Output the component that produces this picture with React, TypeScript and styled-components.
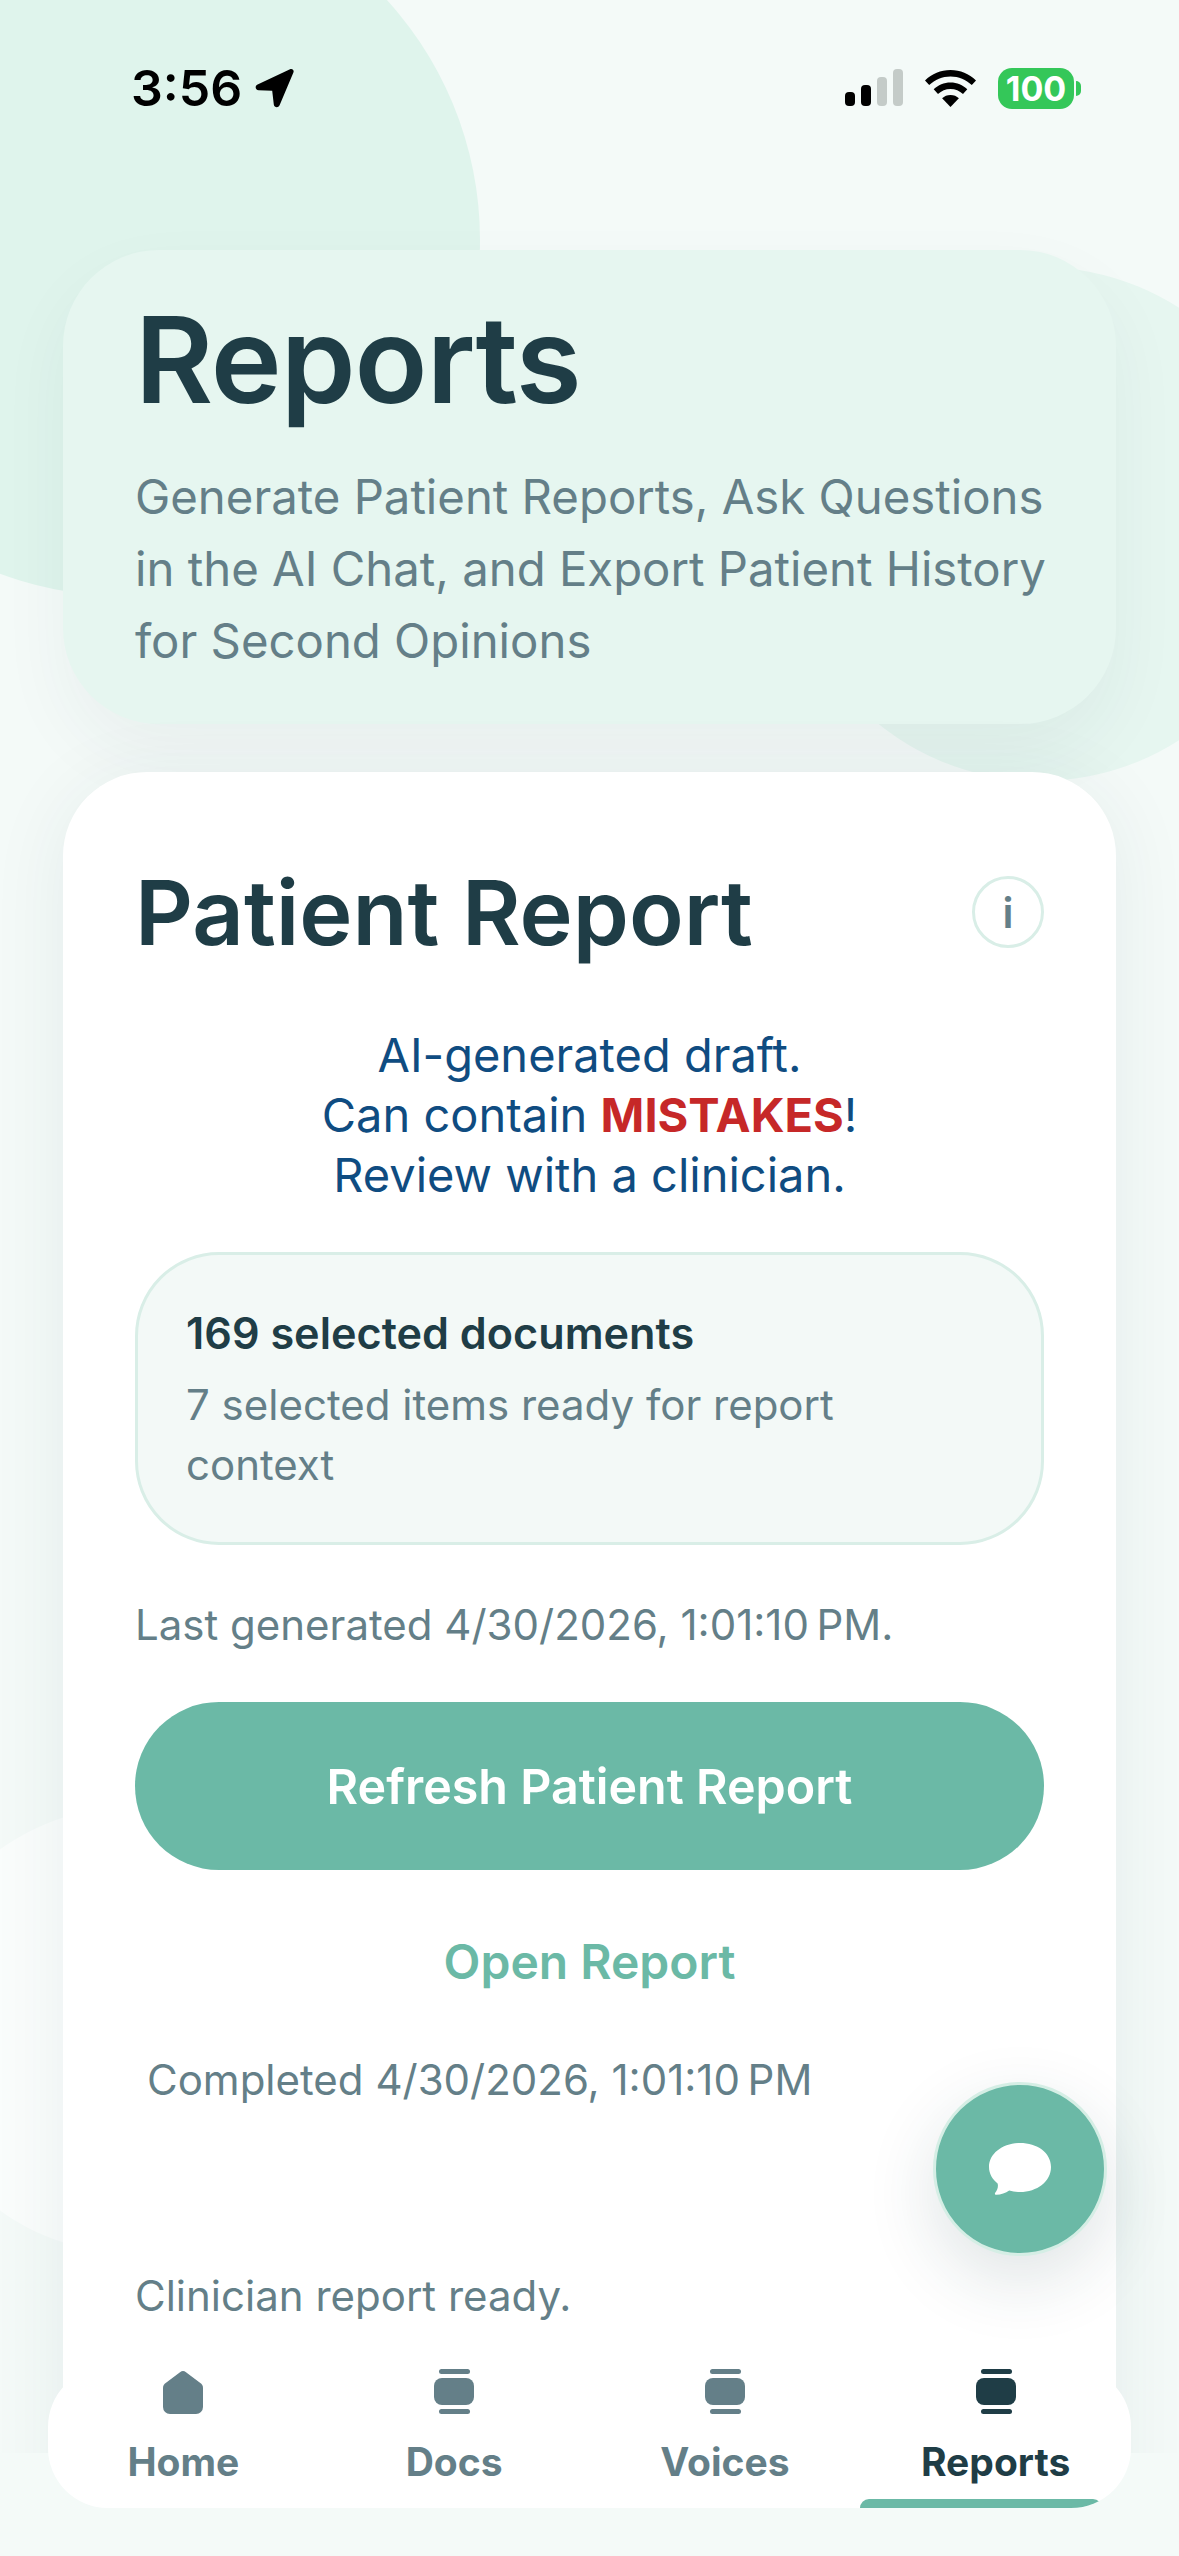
import styled, { createGlobalStyle } from "styled-components";

const GlobalStyle = createGlobalStyle`
  * { box-sizing: border-box; }
  html, body { margin: 0; padding: 0; background: #f4faf8; }
  body { font-family: Inter, "Noto Sans", sans-serif; }
`;

const Screen = styled.div`
  position: relative;
  width: 1179px;
  height: 2556px;
  overflow: hidden;
  background: #f4faf8;
`;

const Blob = styled.div<{ $x: number; $y: number; $r: number; $color: string }>`
  position: absolute;
  left: ${({ $x, $r }) => $x - $r}px;
  top: ${({ $y, $r }) => $y - $r}px;
  width: ${({ $r }) => $r * 2}px;
  height: ${({ $r }) => $r * 2}px;
  border-radius: 50%;
  background: ${({ $color }) => $color};
`;

const Scroll = styled.div`
  position: relative;
  height: 2453px;
  overflow: hidden;
`;

const StatusBar = styled.div`
  display: flex;
  justify-content: space-between;
  align-items: center;
  height: 176px;
  padding: 0 105px 0 131px;
`;

const TimeGroup = styled.div`
  display: flex;
  align-items: center;
  gap: 12px;
`;

const Time = styled.span`
  font-size: 50px;
  font-weight: 600;
  line-height: 60px;
  color: #000;
`;

const StatusIcons = styled.div`
  display: flex;
  align-items: center;
  gap: 22px;
`;

const Battery = styled.div`
  position: relative;
  display: flex;
  align-items: center;
  justify-content: center;
  width: 76px;
  height: 41px;
  border-radius: 14px;
  background: #34c759;
  color: #fff;
  font-size: 34px;
  font-weight: 700;

  &::after {
    content: "";
    position: absolute;
    right: -7px;
    top: 13px;
    width: 5px;
    height: 15px;
    border-radius: 0 8px 8px 0;
    background: #34c759;
  }
`;

const Column = styled.div`
  padding: 74px 63px 0;
`;

const Hero = styled.section`
  height: 474px;
  padding: 36px 72px 0;
  border-radius: 96px;
  background: #e6f6f0;
  box-shadow: 0 30px 70px rgba(31, 61, 70, 0.05);
`;

const HeroTitle = styled.h1`
  margin: 0;
  font-size: 120px;
  line-height: 148px;
  font-weight: 600;
  letter-spacing: -1px;
  color: #1f3d46;
`;

const HeroText = styled.p`
  margin: 27px 0 0;
  font-size: 47.3px;
  line-height: 72px;
  white-space: nowrap;
  color: #647f88;
`;

const Card = styled.section`
  margin-top: 48px;
  height: 1800px;
  padding: 85px 72px 0;
  border-radius: 84px;
  background: #fff;
  box-shadow: 0 10px 80px rgba(31, 61, 70, 0.07);
`;

const CardHeader = styled.div`
  display: flex;
  justify-content: space-between;
  align-items: center;
  height: 110px;
`;

const CardTitle = styled.h2`
  margin: 0;
  font-size: 90px;
  font-weight: 600;
  color: #1f3d46;
`;

const InfoButton = styled.div`
  display: flex;
  align-items: center;
  justify-content: center;
  width: 72px;
  height: 72px;
  border-radius: 50%;
  border: 3px solid #d9eee7;
  color: #647f88;
  font-size: 42px;
  font-weight: 600;
`;

const Warning = styled.p`
  margin: 58px 0 0;
  font-size: 47px;
  line-height: 60px;
  text-align: center;
  color: #0f4c81;
`;

const Mistakes = styled.strong`
  font-weight: 700;
  color: #c62828;
`;

const SelectionBox = styled.div`
  margin-top: 47px;
  height: 293px;
  padding: 48px 48px 0;
  border: 3px solid #d9eee7;
  border-radius: 84px;
  background: #f3f9f7;
`;

const SelectionTitle = styled.div`
  font-size: 43.2px;
  line-height: 60px;
  font-weight: 600;
  color: #1f3d46;
`;

const SelectionText = styled.div`
  margin-top: 12px;
  font-size: 42px;
  line-height: 60px;
  color: #647f88;
`;

const Meta = styled.p<{ $indent?: number; $top: number }>`
  margin: ${({ $top }) => $top}px 0 0 ${({ $indent = 0 }) => $indent}px;
  font-size: 42px;
  line-height: 60px;
  color: #647f88;
`;

const PrimaryButton = styled.button`
  display: block;
  width: 100%;
  height: 168px;
  margin-top: 47px;
  border: 0;
  border-radius: 84px;
  background: #6bb9a6;
  color: #fff;
  font: 600 48.4px Inter, sans-serif;
`;

const TextButton = styled.div`
  margin-top: 62px;
  font-size: 48px;
  line-height: 60px;
  font-weight: 600;
  text-align: center;
  color: #6bb9a6;
`;

const Fab = styled.div`
  position: absolute;
  left: 933px;
  top: 2082px;
  display: flex;
  align-items: center;
  justify-content: center;
  width: 174px;
  height: 174px;
  border-radius: 50%;
  border: 3px solid #d5eee5;
  background: #6bb9a6;
  box-shadow: 0 24px 70px rgba(31, 61, 70, 0.14);
`;

const TabBar = styled.nav`
  position: absolute;
  left: 48px;
  top: 2367px;
  display: grid;
  grid-template-columns: repeat(4, 1fr);
  width: 1083px;
  height: 141px;
  overflow: hidden;
  border-radius: 60px;
  background: #fff;
`;

const Tab = styled.div<{ $active?: boolean }>`
  display: flex;
  flex-direction: column;
  align-items: center;
  padding-top: 2px;
  color: ${({ $active }) => ($active ? "#1f3d46" : "#647f88")};
`;

const TabIcon = styled.svg`
  display: block;
  width: 40px;
  height: 46px;
  fill: currentColor;
`;

const TabLabel = styled.span`
  margin-top: 19px;
  font-size: 39px;
  line-height: 56px;
  font-weight: 700;
`;

const TabIndicator = styled.div`
  position: absolute;
  left: 812px;
  bottom: 0;
  width: 242px;
  height: 9px;
  border-radius: 12px 12px 0 0;
  background: #6bb9a6;
`;

const HomeIcon = () => (
  <TabIcon viewBox="0 0 40 46">
    <path d="M17 3.2a5 5 0 0 1 6 0l14 10.6a6 6 0 0 1 3 5.2v19a7 7 0 0 1-7 7H7a7 7 0 0 1-7-7V19a6 6 0 0 1 3-5.2z" />
  </TabIcon>
);

const DocIcon = () => (
  <TabIcon viewBox="0 0 40 46">
    <rect x="5" y="0" width="31" height="5" rx="2.5" />
    <rect x="0" y="9" width="40" height="27" rx="8" />
    <rect x="5" y="40" width="31" height="5" rx="2.5" />
  </TabIcon>
);

const tabs = [
  { label: "Home", icon: <HomeIcon /> },
  { label: "Docs", icon: <DocIcon /> },
  { label: "Voices", icon: <DocIcon /> },
  { label: "Reports", icon: <DocIcon />, active: true },
];

export default function App() {
  return (
    <Screen>
      <GlobalStyle />
      <Blob $x={124} $y={240} $r={356} $color="#dff4ec" />
      <Blob $x={1040} $y={524} $r={257} $color="#e6f6f0" />
      <Blob $x={131} $y={2030} $r={223} $color="#fafdfc" />
      <Scroll>
        <StatusBar>
          <TimeGroup>
            <Time>3:56</Time>
            <svg width="40" height="40" viewBox="0 0 40 40">
              <path
                d="M36 1.2 3.6 16.4c-3.2 1.6-2.2 5.6 1 5.800l13.600.6 1.600 13.600c.4 3.200 4.400 3.800 5.800.8L39.400 4.600C40.400 2.200 38.400.2 36 1.200z"
                fill="#000"
              />
            </svg>
          </TimeGroup>
          <StatusIcons>
            <svg width="58" height="38" viewBox="0 0 58 38">
              <rect x="0" y="23" width="10" height="14" rx="4" fill="#000" />
              <rect x="16" y="16" width="10" height="21" rx="4" fill="#000" />
              <rect x="32" y="8" width="10" height="29" rx="4" fill="#c4cbc8" />
              <rect x="48" y="0" width="10" height="37" rx="4" fill="#c4cbc8" />
            </svg>
            <svg width="51" height="37" viewBox="0 0 51 37">
              <path d="M25.500 0C15.600 0 7 3.800 0 10.400l4.200 4.600C10 9.500 17.300 6.400 25.500 6.400S41 9.500 46.800 15l4.200-4.600C44 3.800 35.400 0 25.500 0z" />
              <path d="M25.500 12.600c-6.500 0-12.300 2.500-16.800 6.700l4.300 4.600c3.400-3.100 7.700-5 12.500-5s9.100 1.900 12.500 5l4.300-4.600c-4.500-4.200-10.300-6.700-16.800-6.700z" />
              <path d="M25.500 25c-3.200 0-6.200 1.200-8.400 3.300l8.400 8.700 8.400-8.700c-2.200-2.100-5.200-3.300-8.400-3.300z" />
            </svg>
            <Battery>100</Battery>
          </StatusIcons>
        </StatusBar>
        <Column>
          <Hero>
            <HeroTitle>Reports</HeroTitle>
            <HeroText>
              Generate Patient Reports, Ask Questions
              <br />
              in the AI Chat, and Export Patient History
              <br />
              for Second Opinions
            </HeroText>
          </Hero>
          <Card>
            <CardHeader>
              <CardTitle>Patient Report</CardTitle>
              <InfoButton>i</InfoButton>
            </CardHeader>
            <Warning>
              AI-generated draft.
              <br />
              Can contain <Mistakes>MISTAKES</Mistakes>!
              <br />
              Review with a clinician.
            </Warning>
            <SelectionBox>
              <SelectionTitle>169 selected documents</SelectionTitle>
              <SelectionText>7 selected items ready for report context</SelectionText>
            </SelectionBox>
            <Meta $top={50}>Last generated 4/30/2026, 1:01:10{"\u202f"}PM.</Meta>
            <PrimaryButton>Refresh Patient Report</PrimaryButton>
            <TextButton>Open Report</TextButton>
            <Meta $top={58} $indent={12}>
              Completed 4/30/2026, 1:01:10{"\u202f"}PM
            </Meta>
            <Meta $top={156}>Clinician report ready.</Meta>
          </Card>
        </Column>
      </Scroll>
      <Fab>
        <svg width="62" height="52" viewBox="0 0 62 52">
          <path
            d="M31 0C13.900 0 0 10.500 0 24c0 6.700 3.400 12.400 8.600 16.400 1 3.600-.4 7-2.400 9.400-.8 1 0 2.200 1.200 2 4.400-.4 9.400-2 12.800-4.400 3.400 1 7 1.600 10.800 1.600 17.100 0 31-10.500 31-25S48.100 0 31 0z"
            fill="#fff"
          />
        </svg>
      </Fab>
      <TabBar>
        {tabs.map((tab) => (
          <Tab key={tab.label} $active={tab.active}>
            {tab.icon}
            <TabLabel>{tab.label}</TabLabel>
          </Tab>
        ))}
        <TabIndicator />
      </TabBar>
    </Screen>
  );
}
